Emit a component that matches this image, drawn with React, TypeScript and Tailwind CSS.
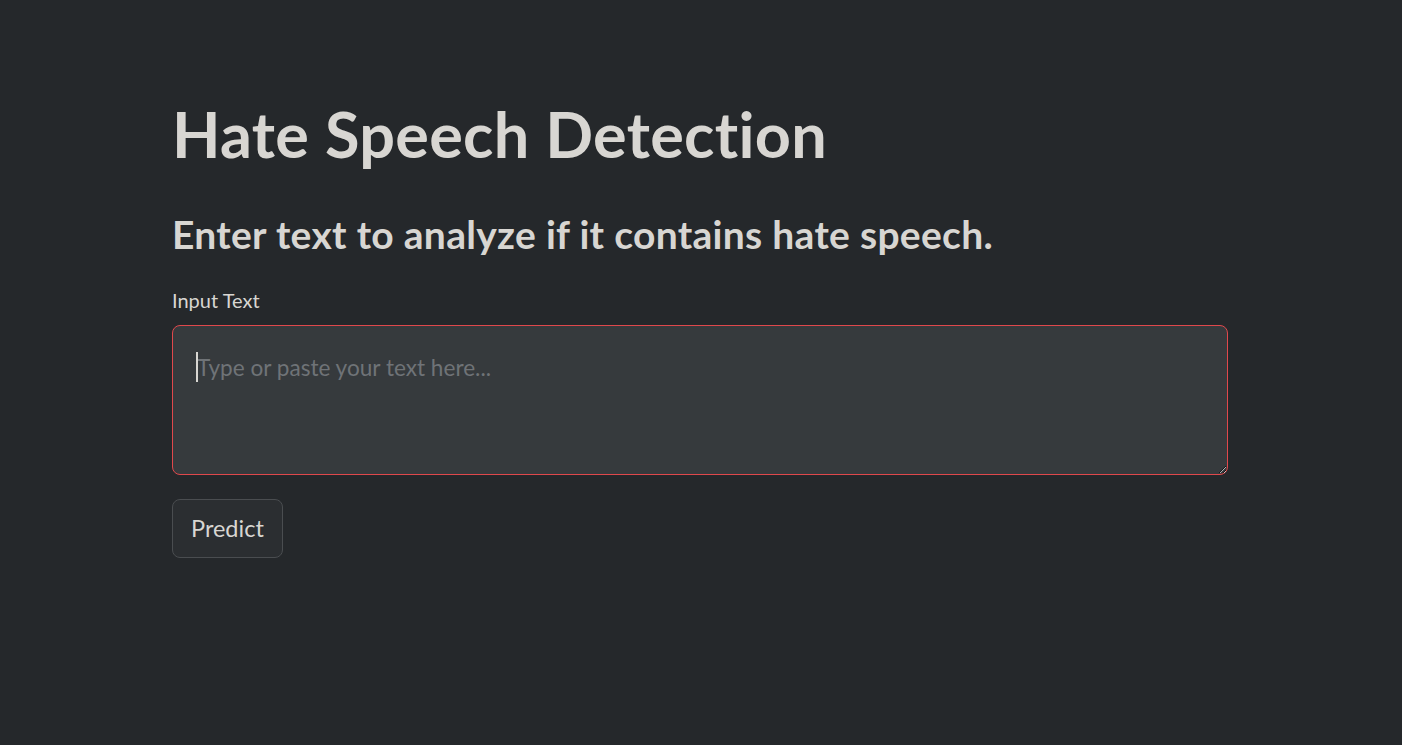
import React from 'react';

export default function App() {
  return (
    <div
      className="min-h-screen bg-[#25282b] text-[#d8d6d2]"
      style={{ fontFamily: 'Lato, "Noto Sans", sans-serif' }}
    >
      <div className="ml-[172px] w-[1056px] pt-[96px]">
        {/* Title */}
        <h1 className="text-[63px] font-bold leading-[76px] tracking-[0.3px]">Hate Speech Detection</h1>

        {/* Subheader */}
        <h2 className="mt-[38px] text-[39px] font-bold leading-[48px] tracking-[0.3px]">
          Enter text to analyze if it contains hate speech.
        </h2>

        {/* Input */}
        <label className="mt-[30px] block text-[20px] leading-[24px]">Input Text</label>
        <div className="relative mt-[13px]">
          <textarea
            placeholder="Type or paste your text here..."
            className="block h-[150px] w-full resize-y rounded-[8px] border border-[#e0484c] bg-[#363a3d] px-[24px] py-[26px] text-[22.6px] leading-[32px] text-[#d8d6d2] outline-none placeholder:text-[#6f7377]"
            style={{ fontFamily: 'Lato, "Noto Sans", sans-serif' }}
          />
          <span className="pointer-events-none absolute left-[24px] top-[27px] h-[30px] w-[2px] bg-[#d8d6d2]" />
        </div>

        {/* Button */}
        <button className="mt-[24px] h-[59px] rounded-[8px] border border-[#4a4d50] bg-[#2b2e31] px-[18px] text-[23.5px] text-[#d8d6d2]">
          Predict
        </button>
      </div>
    </div>
  );
}
